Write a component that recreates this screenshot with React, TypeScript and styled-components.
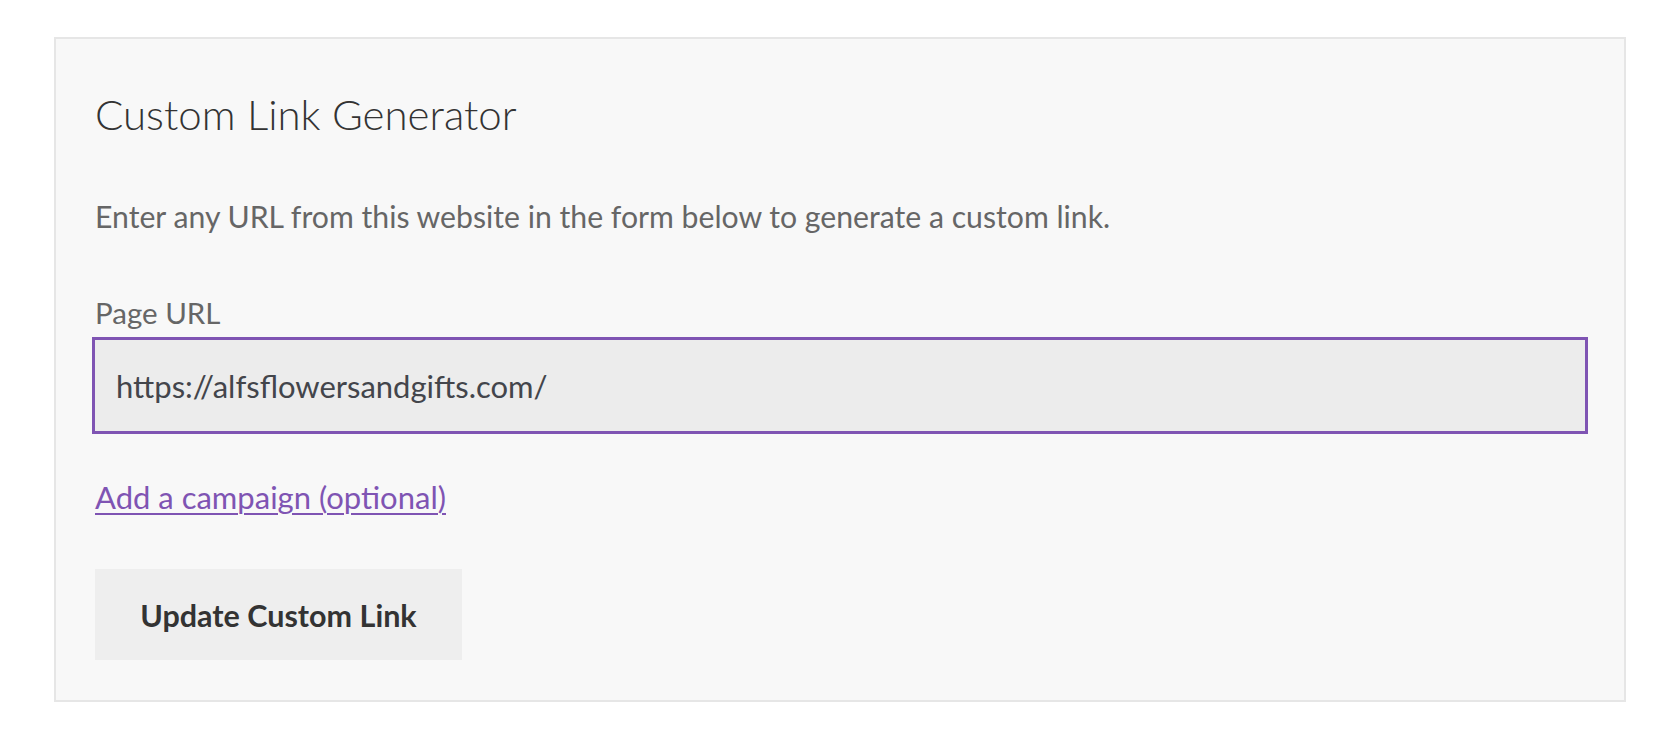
import React from 'react';
import { useState } from 'react';
import styled, { createGlobalStyle } from 'styled-components';

const GlobalStyle = createGlobalStyle`
  html, body {
    margin: 0;
    padding: 0;
    background: #ffffff;
  }

  body {
    font-family: 'Lato', 'Open Sans', sans-serif;
  }
`;

const LinkGenerator: React.FC = () => {
  const [url, setUrl] = useState('https://alfsflowersandgifts.com/');

  return (
    <Page>
      <GlobalStyle />
      <Panel>
        <Title>Custom Link Generator</Title>
        <Intro>Enter any URL from this website in the form below to generate a custom link.</Intro>
        <Label htmlFor="page-url">Page URL</Label>
        <UrlInput id="page-url" value={url} onChange={e => setUrl(e.target.value)} />
        <CampaignLink href="#campaign" onClick={e => e.preventDefault()}>
          Add a campaign (optional)
        </CampaignLink>
        <UpdateButton type="button">Update Custom Link</UpdateButton>
      </Panel>
    </Page>
  );
};

export default LinkGenerator;

const Page = styled.div`
  padding: 37px 52px 0 54px;
`;

const Panel = styled.section`
  display: flex;
  flex-direction: column;
  align-items: flex-start;
  box-sizing: border-box;
  width: 1572px;
  padding: 50px 36px 40px 39px;
  background-color: #f8f8f8;
  border: 2px solid #e6e6e6;
`;

const Title = styled.h2`
  margin: 0;
  font-family: 'Lato', sans-serif;
  font-weight: 300;
  font-size: 42px;
  line-height: 50px;
  color: #333333;
`;

const Intro = styled.p`
  margin: 57px 0 0;
  font-size: 30.2px;
  line-height: 40px;
  color: #666666;
`;

const Label = styled.label`
  margin-top: 57px;
  font-size: 29.5px;
  line-height: 40px;
  color: #666666;
`;

const UrlInput = styled.input`
  box-sizing: border-box;
  width: calc(100% + 3px);
  height: 97px;
  margin: 4px 0 0 -3px;
  padding: 0 21px;
  font-family: 'Lato', sans-serif;
  font-size: 31px;
  color: #43454b;
  background-color: #ececec;
  border: 3px solid #7f54b3;
  outline: none;
`;

const CampaignLink = styled.a`
  margin-top: 43px;
  font-size: 31px;
  line-height: 40px;
  color: #7f54b3;
  text-decoration: underline;
  text-decoration-thickness: 2px;
  text-underline-offset: 4px;
`;

const UpdateButton = styled.button`
  width: 367px;
  height: 91px;
  margin-top: 52px;
  padding: 0;
  font-family: 'Lato', sans-serif;
  font-weight: 700;
  font-size: 30.5px;
  color: #333333;
  background-color: #eeeeee;
  border: none;
  cursor: pointer;
`;
